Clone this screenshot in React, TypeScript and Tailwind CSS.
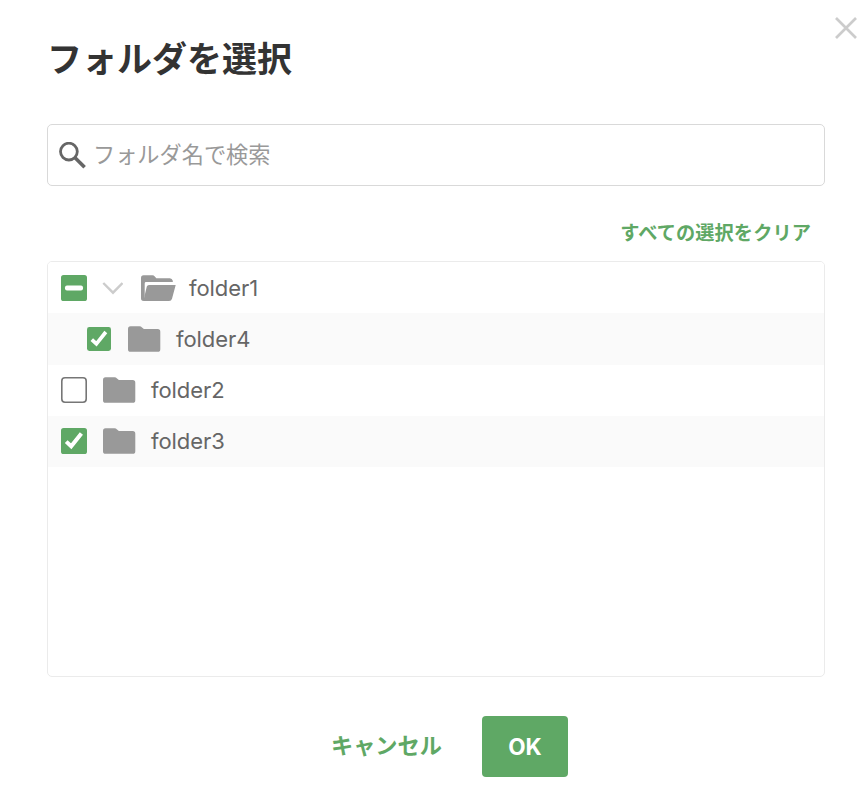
import { useState } from "react";

type CheckState = "on" | "off" | "mixed";

interface FolderRow {
  name: string;
  state: CheckState;
  open?: boolean;
  nested?: boolean;
  rowClass: string;
  labelClass: string;
}

const initialRows: FolderRow[] = [
  {
    name: "folder1",
    state: "mixed",
    open: true,
    rowClass: "h-[51px] pl-[13px] bg-white",
    labelClass: "ml-[13px] pt-0.5",
  },
  {
    name: "folder4",
    state: "on",
    nested: true,
    rowClass: "h-[52px] pl-[39px] bg-[#fafafa]",
    labelClass: "ml-[15px]",
  },
  {
    name: "folder2",
    state: "off",
    rowClass: "h-[51px] pl-[13px] pb-px bg-white",
    labelClass: "ml-[15px] pt-px",
  },
  {
    name: "folder3",
    state: "on",
    rowClass: "h-[51px] pl-[13px] pb-px bg-[#fafafa]",
    labelClass: "ml-[15px] pt-px",
  },
];

const Checkbox = ({ state, small }: { state: CheckState; small?: boolean }) => (
  <svg className={small ? "h-6 w-6" : "h-[26px] w-[26px]"} viewBox="0 0 26 26">
    {state === "off" ? (
      <rect x=".8" y=".8" width="24.4" height="24.4" rx="3.2" fill="#fff" stroke="#767676" strokeWidth="1.6" />
    ) : (
      <rect width="26" height="26" rx="2.6" fill="#5fa865" />
    )}
    {state === "mixed" && <rect x="4" y="10.5" width="18" height="5" rx="2" fill="#fff" />}
    {state === "on" && (
      <path d="M5.2 13.6L10.2 18.3L20.4 5.4" fill="none" stroke="#fff" strokeWidth="4" />
    )}
  </svg>
);

const ClosedFolder = () => (
  <svg className="h-[26px] w-[33px]" viewBox="0 0 33 26">
    <path
      d="M0 3Q0 .3 2.5 .3H11.5Q13 .3 14 1.4L15.9 3.1H29.7Q32.3 3.1 32.3 5.8V23.2Q32.3 25.8 29.7 25.8H2.6Q0 25.8 0 23.2Z"
      fill="#999"
    />
  </svg>
);

const OpenFolder = () => (
  <svg className="h-[26px] w-[35px]" viewBox="0 0 35 26">
    <path
      d="M2.5 .3H11.4Q12.9 .3 13.8 1.4L15.3 3.3H28.8Q31.2 3.3 31.8 5.8V7.1H5Q3.7 7.1 3.7 8.4V20.5L2.8 26H2.5Q0 26 0 23.3V3Q0 .3 2.5 .3Z"
      fill="#999"
    />
    <path d="M8 9.9H34.7L31 23.7Q30.4 26 28 26H2.3L5.8 11.6Q6.2 9.9 8 9.9Z" fill="#999" />
  </svg>
);

export default function App() {
  const [query, setQuery] = useState("");
  const [rows, setRows] = useState(initialRows);

  const clearAll = () => setRows(rows.map((row) => ({ ...row, state: "off" as CheckState })));

  const toggle = (name: string) =>
    setRows(
      rows.map((row) =>
        row.name === name ? { ...row, state: row.state === "on" ? "off" : "on" } : row,
      ),
    );

  return (
    <div className="relative flex h-[808px] w-[868px] flex-col bg-white pr-[43px] pl-[47px] font-['Inter','Noto_Sans_CJK_JP',sans-serif]">
      <button aria-label="閉じる" className="absolute top-[17px] right-[11px] cursor-pointer">
        <svg className="h-[22px] w-[22px]" viewBox="0 0 22 22">
          <path d="M1 1L21 21M21 1L1 21" stroke="#ccc" strokeWidth="2.7" />
        </svg>
      </button>

      <h1 className="mt-[33px] h-[52px] text-[35px] leading-[52px] font-bold text-[#333]">
        フォルダを選択
      </h1>

      <label className="mt-[39px] flex h-[62px] items-center rounded-[5px] border border-[#d9d9d9] pl-[11px]">
        <svg className="h-[27px] w-[27px] shrink-0" viewBox="0 0 27 27" fill="none" stroke="#666">
          <circle cx="9.9" cy="9.6" r="8.4" strokeWidth="2.8" />
          <path d="M15.8 15.5L25.6 25.3" strokeWidth="3.6" />
        </svg>
        <input
          value={query}
          onChange={(e) => setQuery(e.target.value)}
          placeholder="フォルダ名で検索"
          className="mb-0.5 ml-[7px] h-10 flex-1 text-[22.2px] text-[#666] outline-none placeholder:text-[#999]"
        />
      </label>

      <div className="mt-[31px] flex h-[32px] justify-end pr-[14px]">
        <button
          onClick={clearAll}
          className="cursor-pointer text-[19.2px] leading-[32px] font-bold tracking-[0.1px] text-[#5fa865]"
        >
          すべての選択をクリア
        </button>
      </div>

      <div className="mt-3 h-[416px] overflow-hidden rounded-[5px] border border-[#ebebeb]">
        {rows.map((row) => (
          <div key={row.name} className={`flex items-center ${row.rowClass}`}>
            <button onClick={() => toggle(row.name)} className="flex cursor-pointer">
              <Checkbox state={row.state} small={row.nested} />
            </button>
            {row.open && (
              <svg className="ml-[15px] h-[14px] w-[21px]" viewBox="0 0 21 14">
                <path d="M1.3 2L11 11.7L20.5 2" fill="none" stroke="#ccc" strokeWidth="2.4" />
              </svg>
            )}
            <span className={row.open ? "ml-[18px]" : row.nested ? "ml-[17px]" : "ml-4"}>
              {row.open ? <OpenFolder /> : <ClosedFolder />}
            </span>
            <span className={`text-[22px] tracking-[-0.05px] text-[#666] ${row.labelClass}`}>
              {row.name}
            </span>
          </div>
        ))}
      </div>

      <div className="mt-[39px] flex h-[61px] items-center pl-[284px]">
        <button className="cursor-pointer pb-0.5 text-[22.2px] font-bold text-[#5fa865]">
          キャンセル
        </button>
        <button className="ml-10 h-[61px] w-[86px] cursor-pointer rounded-[4px] bg-[#5fa865] text-[22.5px] font-bold text-white">
          OK
        </button>
      </div>
    </div>
  );
}
